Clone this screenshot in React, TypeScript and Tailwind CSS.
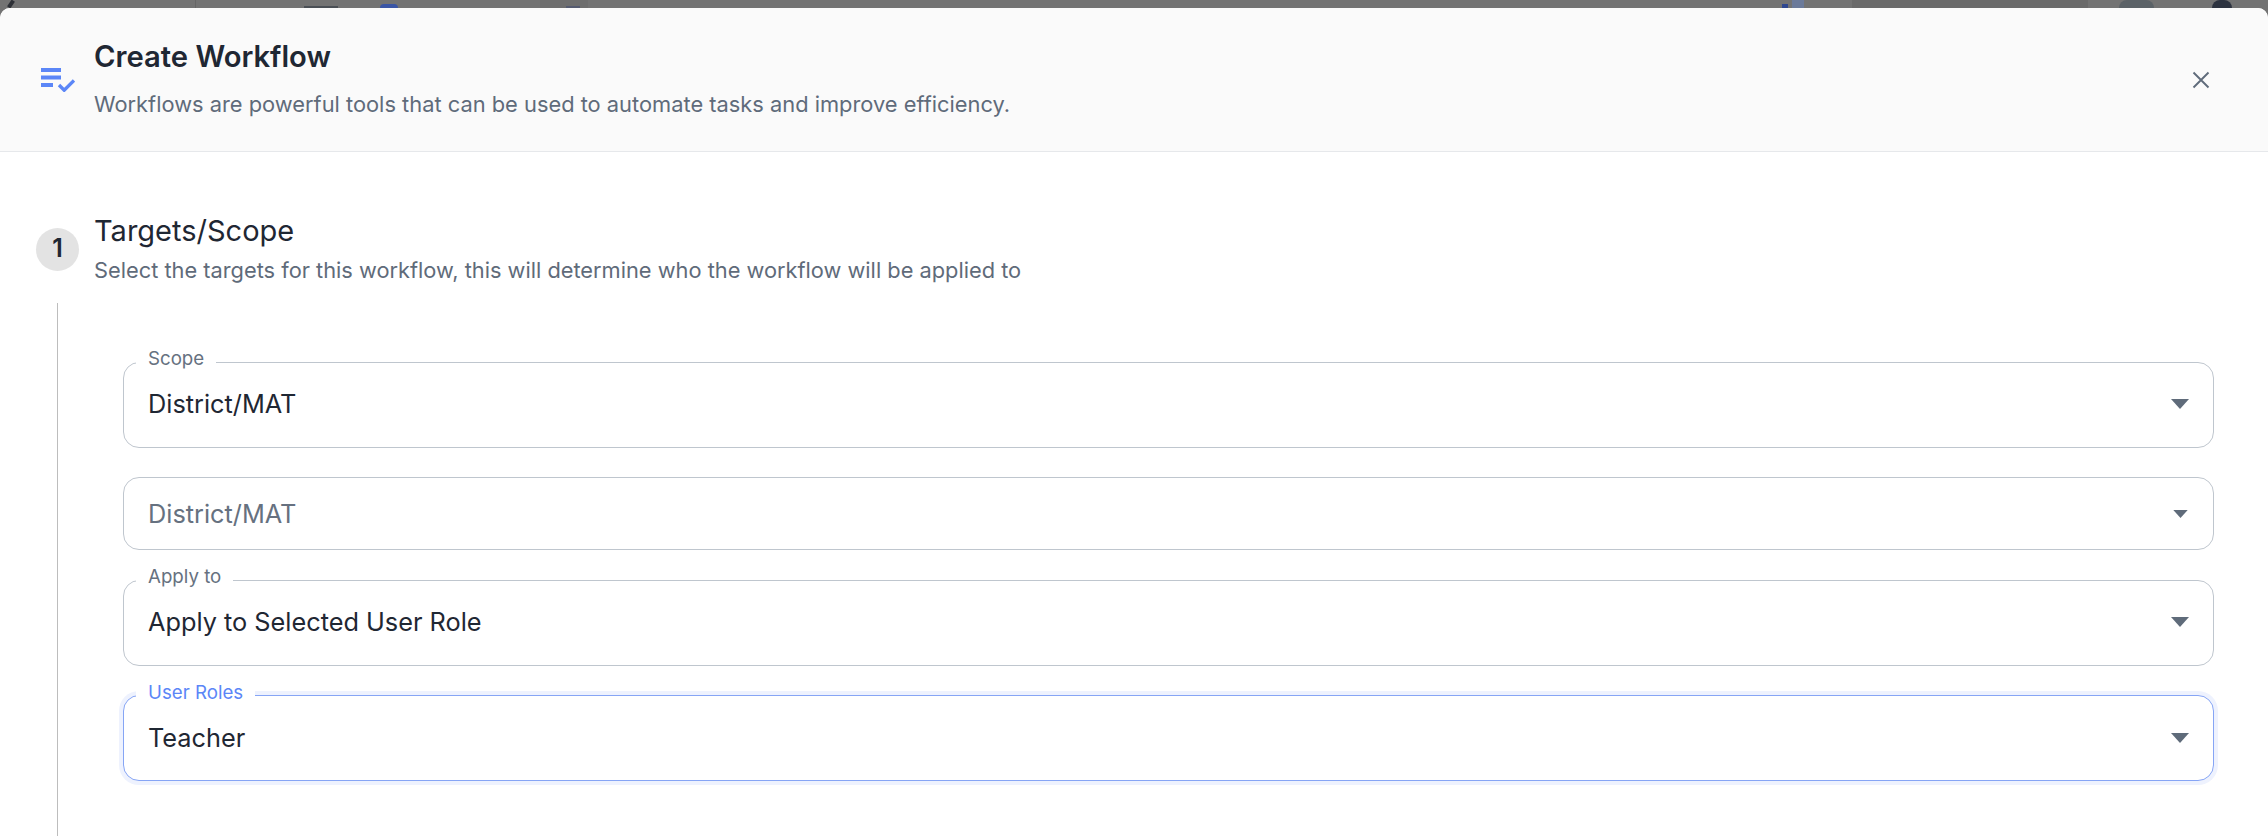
const font = "font-['Inter','Liberation_Sans',sans-serif]";

function Caret({ small }: { small?: boolean }) {
  return (
    <svg viewBox="0 0 18 10" className={small ? "h-[8px] w-[15px] shrink-0" : "h-[10px] w-[18px] shrink-0"}>
      <path d="M0 0H18L9 10Z" fill="#5f6b7a" />
    </svg>
  );
}

function Field({ label, value, tall = true, focused, placeholder }: { label?: string; value: string; tall?: boolean; focused?: boolean; placeholder?: boolean }) {
  return (
    <div className="relative">
      {label ? (
        <span className={`absolute left-[13px] z-10 bg-white px-[12px] text-[18.7px] leading-[26px] ${focused ? "top-[-15px] text-[#5b86f7]" : "top-[-16px] text-[#667180]"}`}>
          {label}
        </span>
      ) : null}
      <div
        className={`flex items-center justify-between rounded-[16px] border bg-white pl-[24px] ${tall ? "h-[86px] pr-[24px]" : "h-[73px] pr-[25px] pt-[1px]"} ${tall && !focused ? "pb-[2px]" : ""} ${focused ? "border-[#86a5f5] shadow-[0_0_0_4px_#eef2fe]" : "border-[#bfc6ce]"}`}
      >
        <span className={`text-[25.3px] leading-[34px] ${placeholder ? "text-[#667180]" : "text-[#1f2733]"}`}>{value}</span>
        <Caret small={!tall} />
      </div>
    </div>
  );
}

/* The dimmed page behind the dialog: only its bottom edge shows above the dialog. */
function BackdropStrip() {
  return (
    <div className="flex h-[8px] items-end overflow-hidden blur-[0.6px]">
      <span className="ml-[9px] h-[8px] w-[4px] rotate-[35deg] bg-[#2d3036]" />
      <span className="ml-[182px] h-[8px] w-px bg-[#666666]" />
      <span className="ml-[108px] h-[2px] w-[34px] bg-[#4a4f55]" />
      <span className="ml-[42px] h-[4px] w-[18px] rounded-t-full bg-[#3a55a5]" />
      <span className="ml-[142px] flex h-[8px] w-[48px] items-end justify-end bg-[#6e6e6e] pr-[8px]">
        <span className="h-[2px] w-[14px] bg-[#555b70]" />
      </span>
      <span className="ml-[1194px] h-[4px] w-[6px] bg-[#2f478f]" />
      <span className="ml-[4px] h-[8px] w-[12px] bg-[#6b7a9a]" />
      <span className="ml-[48px] h-[8px] w-[236px] bg-[#6a6a6a]" />
      <span className="ml-[31px] h-[8px] w-[35px] rounded-t-[10px] bg-[#5b6267]" />
      <span className="ml-[58px] h-[8px] w-[20px] rounded-t-[10px] bg-[#2d3340]" />
    </div>
  );
}

export default function App() {
  return (
    <div className={`${font} h-[836px] w-[2268px] overflow-hidden bg-[#737373]`}>
      <BackdropStrip />
      <div className="h-[828px] rounded-t-[10px] bg-white">
        <header className="flex h-[144px] items-center rounded-t-[10px] border-b border-[#e6e8eb] bg-[#fafafa] pl-[41px] pr-[58px]">
          <svg viewBox="0 0 34 24" className="mr-[19px] h-[24px] w-[34px] shrink-0">
            <path d="M0 0h20v4H0zM0 7.5h20v4H0zM0 15h12v4H0z" fill="#5b86f7" />
            <path d="M18 17l5.2 5.2L33 12.4" fill="none" stroke="#5b86f7" strokeWidth="3.4" />
          </svg>
          <div className="flex-1 pb-[3px]">
            <h1 className="text-[29.2px] leading-[40px] font-semibold text-[#1f2733]">Create Workflow</h1>
            <p className="mt-[12px] text-[21.85px] leading-[30px] text-[#5f6b7a]">
              Workflows are powerful tools that can be used to automate tasks and improve efficiency.
            </p>
          </div>
          <svg viewBox="0 0 18 18" className="h-[18px] w-[18px]">
            <path d="M1.5 1.5l15 15M16.5 1.5l-15 15" stroke="#5f6b7a" strokeWidth="1.9" fill="none" />
          </svg>
        </header>
        <section className="pl-[36px] pr-[54px] pt-[59px]">
          <div className="flex items-center">
            <div className="flex h-[43px] w-[43px] items-center justify-center rounded-full bg-[#e3e3e3] text-[25px] font-semibold text-[#1f2733]">1</div>
            <div className="ml-[15px] pb-[2px]">
              <h2 className="text-[29px] leading-[40px] text-[#1f2733]">Targets/Scope</h2>
              <p className="mt-[4px] text-[21.8px] leading-[30px] text-[#5f6b7a]">Select the targets for this workflow, this will determine who the workflow will be applied to</p>
            </div>
          </div>
          <div className="ml-[21px] mt-[16px] h-[540px] border-l border-[#bdbdbd] pl-[65px] pt-[59px]">
            <div className="flex flex-col gap-[29px]">
              <Field label="Scope" value="District/MAT" />
              <div className="pb-[1px]">
                <Field value="District/MAT" tall={false} placeholder />
              </div>
              <Field label="Apply to" value="Apply to Selected User Role" />
              <Field label="User Roles" value="Teacher" focused />
            </div>
          </div>
        </section>
      </div>
    </div>
  );
}
